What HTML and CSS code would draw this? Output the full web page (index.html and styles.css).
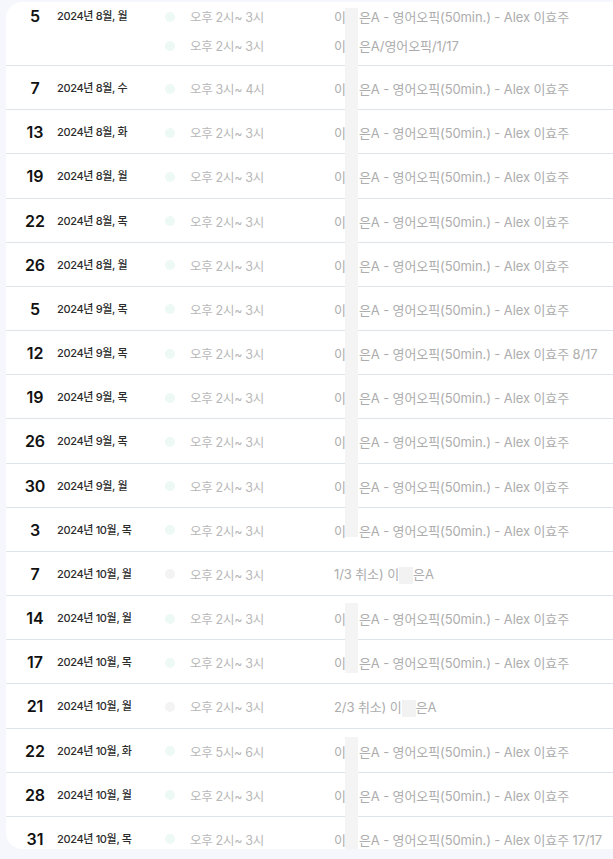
FILE: index.html
```html
<!DOCTYPE html>
<html lang="ko">
<head>
<meta charset="utf-8">
<link rel="stylesheet" href="styles.css">
</head>
<body>
<div class="card">
  <div class="row first">
    <div class="day">5</div><div class="date">2024년 8월, 월</div>
    <div class="slots">
      <div class="slot"><span class="dot"></span><span class="time">오후 2시~ 3시</span><span class="desc">이<span class="gap"></span>은A - 영어오픽(50min.) - Alex 이효주</span></div>
      <div class="slot"><span class="dot"></span><span class="time">오후 2시~ 3시</span><span class="desc">이<span class="gap"></span>은A/영어오픽/1/17</span></div>
    </div>
  </div>
  <div class="row"><div class="day">7</div><div class="date">2024년 8월, 수</div><div class="slots"><div class="slot"><span class="dot"></span><span class="time">오후 3시~ 4시</span><span class="desc">이<span class="gap"></span>은A - 영어오픽(50min.) - Alex 이효주</span></div></div></div>
  <div class="row"><div class="day">13</div><div class="date">2024년 8월, 화</div><div class="slots"><div class="slot"><span class="dot"></span><span class="time">오후 2시~ 3시</span><span class="desc">이<span class="gap"></span>은A - 영어오픽(50min.) - Alex 이효주</span></div></div></div>
  <div class="row"><div class="day">19</div><div class="date">2024년 8월, 월</div><div class="slots"><div class="slot"><span class="dot"></span><span class="time">오후 2시~ 3시</span><span class="desc">이<span class="gap"></span>은A - 영어오픽(50min.) - Alex 이효주</span></div></div></div>
  <div class="row"><div class="day">22</div><div class="date">2024년 8월, 목</div><div class="slots"><div class="slot"><span class="dot"></span><span class="time">오후 2시~ 3시</span><span class="desc">이<span class="gap"></span>은A - 영어오픽(50min.) - Alex 이효주</span></div></div></div>
  <div class="row"><div class="day">26</div><div class="date">2024년 8월, 월</div><div class="slots"><div class="slot"><span class="dot"></span><span class="time">오후 2시~ 3시</span><span class="desc">이<span class="gap"></span>은A - 영어오픽(50min.) - Alex 이효주</span></div></div></div>
  <div class="row"><div class="day">5</div><div class="date">2024년 9월, 목</div><div class="slots"><div class="slot"><span class="dot"></span><span class="time">오후 2시~ 3시</span><span class="desc">이<span class="gap"></span>은A - 영어오픽(50min.) - Alex 이효주</span></div></div></div>
  <div class="row"><div class="day">12</div><div class="date">2024년 9월, 목</div><div class="slots"><div class="slot"><span class="dot"></span><span class="time">오후 2시~ 3시</span><span class="desc">이<span class="gap"></span>은A - 영어오픽(50min.) - Alex 이효주 8/17</span></div></div></div>
  <div class="row"><div class="day">19</div><div class="date">2024년 9월, 목</div><div class="slots"><div class="slot"><span class="dot"></span><span class="time">오후 2시~ 3시</span><span class="desc">이<span class="gap"></span>은A - 영어오픽(50min.) - Alex 이효주</span></div></div></div>
  <div class="row"><div class="day">26</div><div class="date">2024년 9월, 목</div><div class="slots"><div class="slot"><span class="dot"></span><span class="time">오후 2시~ 3시</span><span class="desc">이<span class="gap"></span>은A - 영어오픽(50min.) - Alex 이효주</span></div></div></div>
  <div class="row"><div class="day">30</div><div class="date">2024년 9월, 월</div><div class="slots"><div class="slot"><span class="dot"></span><span class="time">오후 2시~ 3시</span><span class="desc">이<span class="gap"></span>은A - 영어오픽(50min.) - Alex 이효주</span></div></div></div>
  <div class="row"><div class="day">3</div><div class="date">2024년 10월, 목</div><div class="slots"><div class="slot"><span class="dot"></span><span class="time">오후 2시~ 3시</span><span class="desc">이<span class="gap"></span>은A - 영어오픽(50min.) - Alex 이효주</span></div></div></div>
  <div class="row"><div class="day">7</div><div class="date">2024년 10월, 월</div><div class="slots"><div class="slot"><span class="dot off"></span><span class="time">오후 2시~ 3시</span><span class="desc">1/3 취소) 이<span class="box"></span>은A</span></div></div></div>
  <div class="row"><div class="day">14</div><div class="date">2024년 10월, 월</div><div class="slots"><div class="slot"><span class="dot"></span><span class="time">오후 2시~ 3시</span><span class="desc">이<span class="gap"></span>은A - 영어오픽(50min.) - Alex 이효주</span></div></div></div>
  <div class="row"><div class="day">17</div><div class="date">2024년 10월, 목</div><div class="slots"><div class="slot"><span class="dot"></span><span class="time">오후 2시~ 3시</span><span class="desc">이<span class="gap"></span>은A - 영어오픽(50min.) - Alex 이효주</span></div></div></div>
  <div class="row"><div class="day">21</div><div class="date">2024년 10월, 월</div><div class="slots"><div class="slot"><span class="dot off"></span><span class="time">오후 2시~ 3시</span><span class="desc">2/3 취소) 이<span class="box"></span>은A</span></div></div></div>
  <div class="row"><div class="day">22</div><div class="date">2024년 10월, 화</div><div class="slots"><div class="slot"><span class="dot"></span><span class="time">오후 5시~ 6시</span><span class="desc">이<span class="gap"></span>은A - 영어오픽(50min.) - Alex 이효주</span></div></div></div>
  <div class="row"><div class="day">28</div><div class="date">2024년 10월, 월</div><div class="slots"><div class="slot"><span class="dot"></span><span class="time">오후 2시~ 3시</span><span class="desc">이<span class="gap"></span>은A - 영어오픽(50min.) - Alex 이효주</span></div></div></div>
  <div class="row"><div class="day">31</div><div class="date">2024년 10월, 목</div><div class="slots"><div class="slot"><span class="dot"></span><span class="time">오후 2시~ 3시</span><span class="desc">이<span class="gap"></span>은A - 영어오픽(50min.) - Alex 이효주 17/17</span></div></div></div>

  <div class="mask mask-a"></div>
  <div class="mask mask-b"></div>
  <div class="mask mask-c"></div>
</div>
</body>
</html>
```

FILE: styles.css
```css
html, body {
  margin: 0;
  padding: 0;
}
body {
  background: #f5f7fc;
  width: 613px;
  height: 859px;
  overflow: hidden;
  font-family: "Inter", "Noto Sans CJK KR", "Noto Sans", sans-serif;
}
.card {
  position: relative;
  margin: 2px 0 0 6px;
  width: 607px;
  height: 847px;
  background: #ffffff;
  border-radius: 16px 0 0 16px;
  overflow: hidden;
}
.row {
  display: flex;
  align-items: flex-start;
  box-sizing: border-box;
  height: 44.18px;
  border-top: 1px solid #dfe3eb;
  padding: 8px 0 0 12px;
}
.row.first {
  border-top: none;
  height: 63px;
  padding-top: 0;
}
.day {
  width: 34px;
  height: 29px;
  line-height: 29px;
  text-align: center;
  font-size: 16px;
  font-weight: 600;
  color: #111111;
}
.date {
  width: 108px;
  padding-left: 5px;
  height: 29px;
  line-height: 29px;
  font-size: 11px;
  font-weight: 500;
  letter-spacing: -0.35px;
  color: #2b2b2b;
  white-space: nowrap;
}
.slots {
  display: flex;
  flex-direction: column;
}
.slot {
  display: flex;
  align-items: center;
  height: 29px;
}
.dot {
  width: 10px;
  height: 10px;
  border-radius: 50%;
  background: #edf9f4;
  flex: none;
}
.dot.off {
  background: #f3f3f4;
}
.time {
  width: 144px;
  padding-left: 15px;
  font-size: 12.5px;
  letter-spacing: -0.3px;
  color: #b7b7b7;
  white-space: nowrap;
}
.desc {
  font-size: 13px;
  letter-spacing: -0.1px;
  color: #adadad;
  white-space: nowrap;
}
.gap {
  display: inline-block;
  width: 13px;
}
.box {
  display: inline-block;
  width: 14px;
  height: 17px;
  background: #f2f2f2;
  vertical-align: middle;
}
.mask {
  position: absolute;
  left: 339px;
  width: 13px;
  background: #f4f4f4;
}
.mask-a { top: 6px; height: 529px; }
.mask-b { top: 601px; height: 70px; }
.mask-c { top: 735px; height: 112px; }
```
